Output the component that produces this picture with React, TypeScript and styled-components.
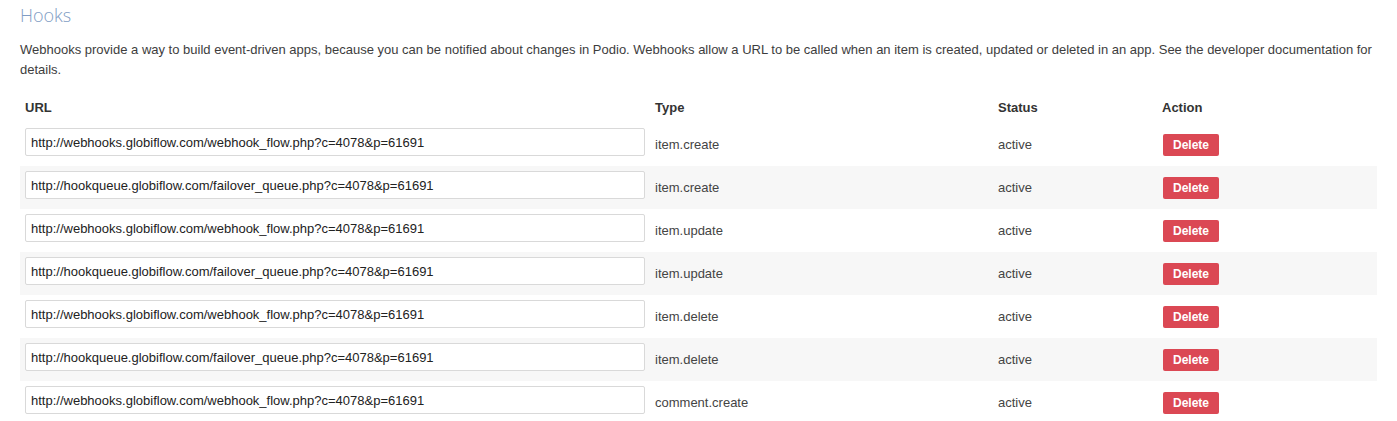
import React from "react";
import styled, { createGlobalStyle } from "styled-components";

const GlobalStyle = createGlobalStyle`
  html, body { margin: 0; padding: 0; background: #ffffff; }
  body { font-family: "Liberation Sans", Arial, sans-serif; color: #333333; }
`;

const Page = styled.div`
  padding: 3px 20px 0 20px;
`;

const Title = styled.h2`
  margin: 0;
  font-family: "Open Sans", sans-serif;
  font-weight: 300;
  font-size: 18px;
  line-height: 24px;
  color: #819dc4;
`;

const Description = styled.p`
  margin: 13px 0 12px 0;
  font-size: 13px;
  line-height: 20px;
  color: #3d3d3d;
`;

const Table = styled.table`
  width: 100%;
  border-collapse: collapse;
  table-layout: fixed;
  font-size: 13px;
  line-height: 20px;
`;

const HeadCell = styled.th<{ $w: number }>`
  width: ${(p) => p.$w}px;
  text-align: left;
  font-weight: bold;
  color: #333333;
  padding: 6px 5px 5px 5px;
`;

const Row = styled.tr<{ $alt: boolean }>`
  background: ${(p) => (p.$alt ? "#f7f7f7" : "transparent")};
`;

const Cell = styled.td`
  padding: 5px;
  vertical-align: middle;
  color: #444444;
`;

const UrlCell = styled.td`
  padding: 5px 5px 10px 5px;
  vertical-align: middle;
`;

const UrlInput = styled.input`
  display: block;
  box-sizing: border-box;
  width: 620px;
  height: 28px;
  margin: 0;
  padding: 0 5px;
  border: 1px solid #d9d9d9;
  border-radius: 2px;
  background: #ffffff;
  font-family: "Liberation Sans", Arial, sans-serif;
  font-size: 13px;
  color: #222222;
  outline: none;
`;

const DeleteButton = styled.button`
  box-sizing: border-box;
  width: 56px;
  height: 22px;
  margin: 0 0 0 1px;
  padding: 0;
  border: none;
  border-radius: 2px;
  background: #db4854;
  color: #ffffff;
  font-family: "Liberation Sans", Arial, sans-serif;
  font-weight: bold;
  font-size: 12px;
  line-height: 22px;
  cursor: pointer;
`;

const A = "http://webhooks.globiflow.com/webhook_flow.php?c=4078&p=61691";
const B = "http://hookqueue.globiflow.com/failover_queue.php?c=4078&p=61691";

const hooks = [
  { url: A, type: "item.create" },
  { url: B, type: "item.create" },
  { url: A, type: "item.update" },
  { url: B, type: "item.update" },
  { url: A, type: "item.delete" },
  { url: B, type: "item.delete" },
  { url: A, type: "comment.create" },
];

export default function App() {
  return (
    <>
      <GlobalStyle />
      <Page>
        <Title>Hooks</Title>
        <Description>
          Webhooks provide a way to build event-driven apps, because you can be notified about changes in Podio.
          Webhooks allow a URL to be called when an item is created, updated or deleted in an app. See the developer
          documentation for details.
        </Description>
        <Table>
          <thead>
            <tr>
              <HeadCell $w={620}>URL</HeadCell>
              <HeadCell $w={333}>Type</HeadCell>
              <HeadCell $w={154}>Status</HeadCell>
              <HeadCell $w={210}>Action</HeadCell>
            </tr>
          </thead>
          <tbody>
            {hooks.map((h, i) => (
              <Row key={i} $alt={i % 2 === 1}>
                <UrlCell>
                  <UrlInput type="text" defaultValue={h.url} readOnly />
                </UrlCell>
                <Cell>{h.type}</Cell>
                <Cell>active</Cell>
                <Cell>
                  <DeleteButton>Delete</DeleteButton>
                </Cell>
              </Row>
            ))}
          </tbody>
        </Table>
      </Page>
    </>
  );
}
